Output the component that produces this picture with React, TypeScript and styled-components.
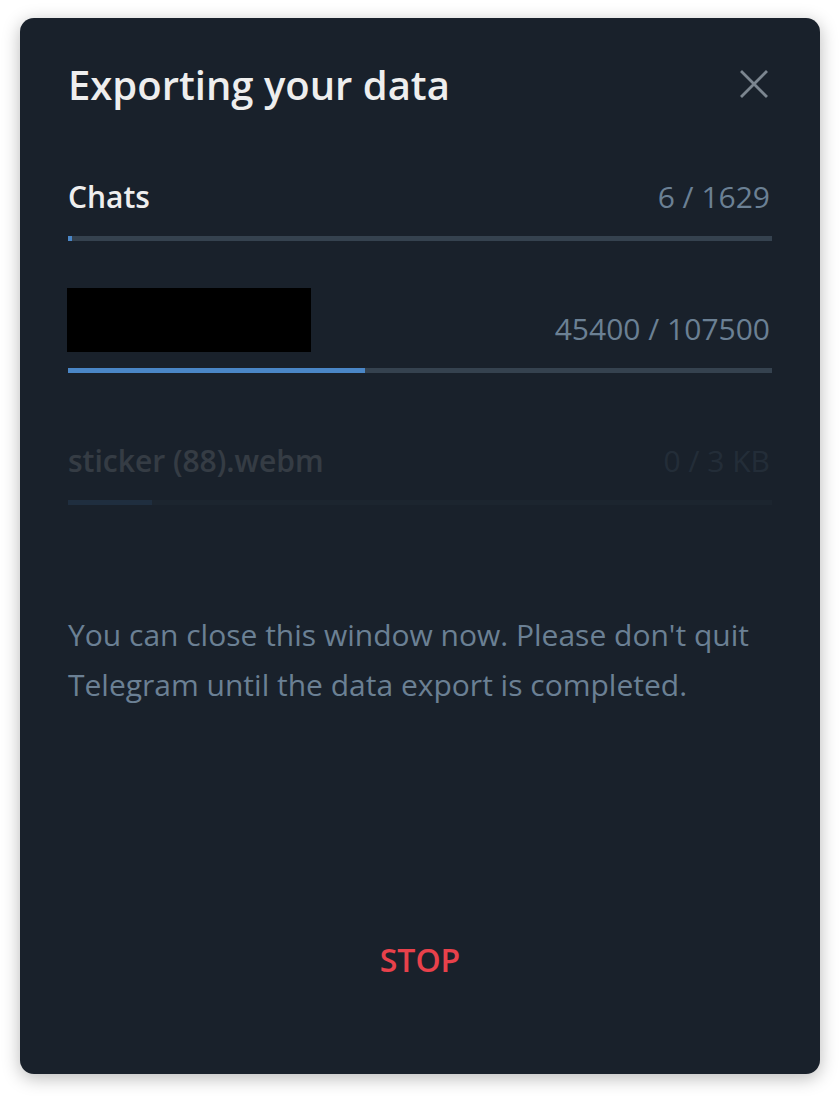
import React from 'react';
import styled, { createGlobalStyle } from 'styled-components';

const GlobalStyle = createGlobalStyle`
  html, body {
    margin: 0;
    padding: 0;
    background: #ffffff;
  }
  body {
    font-family: 'Open Sans', 'Noto Sans', sans-serif;
  }
`;

const Page = styled.div`
  width: 840px;
  height: 1096px;
  padding: 18px 20px 22px;
  box-sizing: border-box;
`;

const Window = styled.div`
  height: 100%;
  background: #19212b;
  border-radius: 14px;
  box-shadow: 0 4px 18px rgba(0, 0, 0, 0.28);
  padding: 42px 48px 0;
  box-sizing: border-box;
  display: flex;
  flex-direction: column;
`;

const Header = styled.div`
  display: flex;
  align-items: center;
  justify-content: space-between;
  height: 50px;
`;

const Title = styled.h1`
  margin: 0;
  font-size: 40px;
  font-weight: 600;
  color: #eeeeee;
  line-height: 50px;
`;

const CloseButton = styled.button`
  width: 36px;
  height: 36px;
  padding: 0;
  margin: -2px 0 0;
  border: none;
  background: none;
  display: flex;
  align-items: center;
  justify-content: center;
  cursor: pointer;
`;

const Rows = styled.div`
  display: flex;
  flex-direction: column;
  gap: 68px;
  margin-top: 67px;
`;

const Row = styled.div<{ $faded?: boolean }>`
  display: flex;
  flex-direction: column;
  gap: 19px;
  opacity: ${(p) => (p.$faded ? 0.13 : 1)};
`;

const RowHead = styled.div`
  display: flex;
  align-items: flex-end;
  justify-content: space-between;
  height: 40px;
  line-height: 40px;
`;

const Label = styled.span`
  font-size: 30px;
  font-weight: 600;
  color: #eeeeee;
`;

const Redacted = styled.div`
  width: 244px;
  height: 64px;
  margin-left: -1px;
  margin-bottom: -3px;
  background: #000000;
`;

const Count = styled.span`
  font-size: 30px;
  color: #6b8094;
  margin-right: 2px;
`;

const Track = styled.div`
  height: 5px;
  background: #35424f;
  overflow: hidden;
`;

const Fill = styled.div`
  height: 100%;
  min-width: 4px;
  background: #4a86c6;
`;

const Note = styled.p`
  margin: 105px 0 0;
  font-size: 30px;
  line-height: 50px;
  color: #6b8094;
`;

const Footer = styled.div`
  margin-top: auto;
  height: 180px;
  display: flex;
  justify-content: center;
  padding-top: 40px;
  box-sizing: border-box;
`;

const StopButton = styled.button`
  border: none;
  background: none;
  padding: 0;
  height: 50px;
  font-family: inherit;
  font-size: 32px;
  font-weight: 600;
  color: #e8414b;
  cursor: pointer;
`;

interface ProgressRowProps {
  label?: string;
  count: string;
  value: number;
  faded?: boolean;
}

const ProgressRow: React.FC<ProgressRowProps> = ({ label, count, value, faded }) => (
  <Row $faded={faded}>
    <RowHead>
      {label ? <Label>{label}</Label> : <Redacted />}
      <Count>{count}</Count>
    </RowHead>
    <Track>
      <Fill style={{ width: `${value * 100}%` }} />
    </Track>
  </Row>
);

const App: React.FC = () => (
  <Page>
    <GlobalStyle />
    <Window>
      <Header>
        <Title>Exporting your data</Title>
        <CloseButton aria-label="Close">
          <svg width="28" height="28" viewBox="0 0 28 28">
            <path
              d="M2 2 L26 26 M26 2 L2 26"
              stroke="#7c8690"
              strokeWidth="2.8"
              strokeLinecap="square"
            />
          </svg>
        </CloseButton>
      </Header>
      <Rows>
        <ProgressRow label="Chats" count="6 / 1629" value={6 / 1629} />
        <ProgressRow count="45400 / 107500" value={45400 / 107500} />
        <ProgressRow label="sticker (88).webm" count="0 / 3 KB" value={0.12} faded />
      </Rows>
      <Note>
        You can close this window now. Please don't quit Telegram until the data export is
        completed.
      </Note>
      <Footer>
        <StopButton>STOP</StopButton>
      </Footer>
    </Window>
  </Page>
);

export default App;
